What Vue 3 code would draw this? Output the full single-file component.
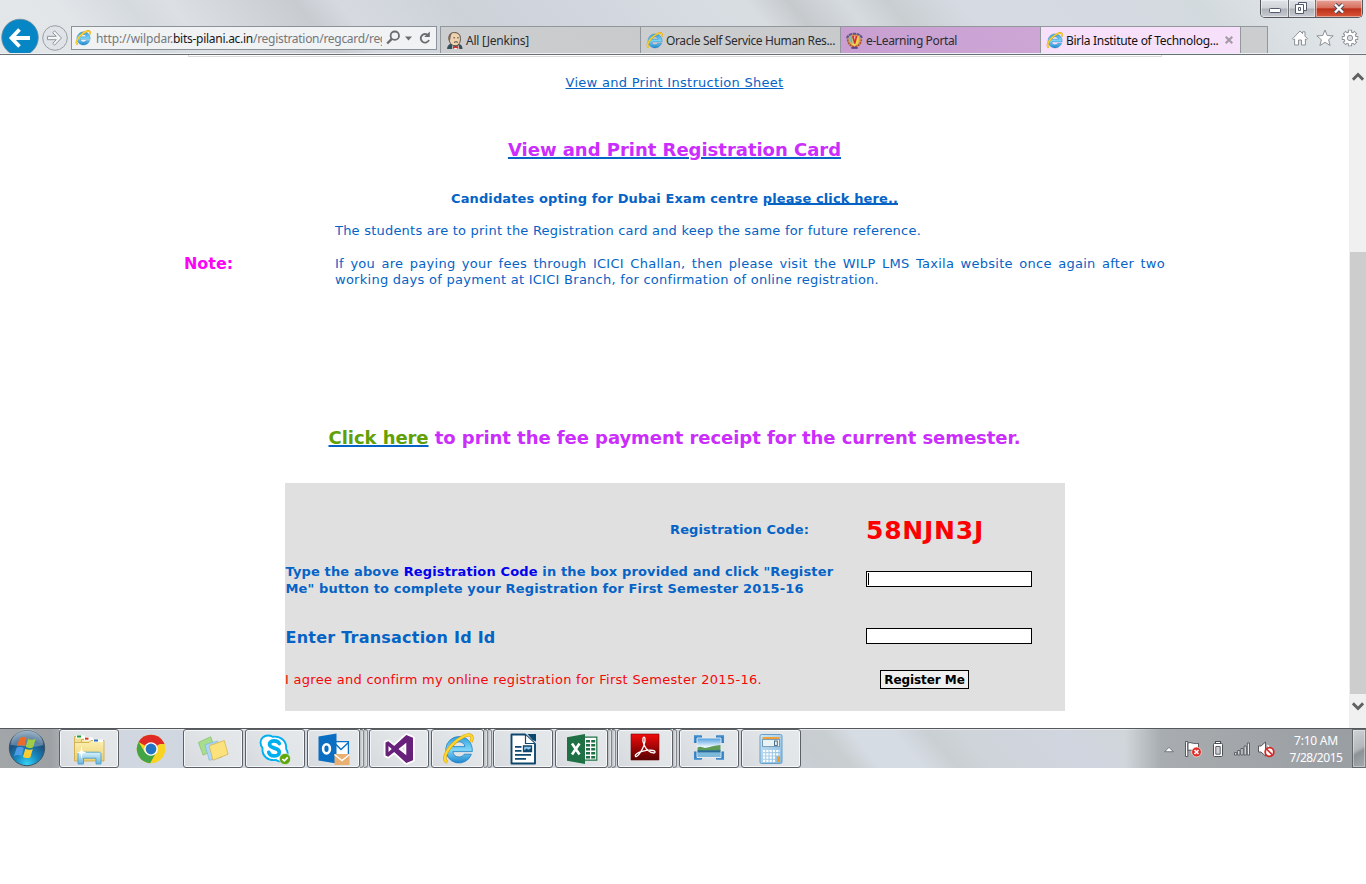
<script setup>
const tabs = [
  { title: 'All [Jenkins]', icon: 'jenkins', cls: 't-jenkins' },
  { title: 'Oracle Self Service Human Res...', icon: 'ie', cls: 't-oracle' },
  { title: 'e-Learning Portal', icon: 'crest', cls: 't-learn' },
  { title: 'Birla Institute of Technolog...', icon: 'ie', cls: 't-birla', active: true }
]
const tasks = [
  { icon: 'explorer' },
  { icon: 'chrome', plain: true },
  { icon: 'notes' },
  { icon: 'skype' },
  { icon: 'outlook', stack: 2 },
  { icon: 'vs' },
  { icon: 'ie', stack: 2 },
  { icon: 'writer' },
  { icon: 'excel', stack: 2 },
  { icon: 'acrobat', stack: 1 },
  { icon: 'snip' },
  { icon: 'calc' }
]
</script>

<template>
  <svg class="defs" width="0" height="0" aria-hidden="true">
    <defs>
      <linearGradient id="gIe" x1="0" y1="0" x2="0" y2="1">
        <stop offset="0" stop-color="#2f9fe0" /><stop offset=".5" stop-color="#7fd6f7" /><stop offset="1" stop-color="#1f86cf" />
      </linearGradient>
      <radialGradient id="gOrb" cx=".5" cy=".95" r=".95">
        <stop offset="0" stop-color="#35d3f5" /><stop offset=".35" stop-color="#1787bd" /><stop offset=".7" stop-color="#1c4f7c" /><stop offset="1" stop-color="#7d9cb4" />
      </radialGradient>
      <linearGradient id="gRed" x1="0" y1="0" x2="0" y2="1">
        <stop offset="0" stop-color="#f20b0b" /><stop offset="1" stop-color="#570000" />
      </linearGradient>
      <linearGradient id="gSky" x1="0" y1="0" x2="0" y2="1">
        <stop offset="0" stop-color="#4a9be0" /><stop offset=".45" stop-color="#f0f8fd" /><stop offset="1" stop-color="#9fd0ef" />
      </linearGradient>
      <linearGradient id="gCalc" x1="0" y1="0" x2="1" y2="1">
        <stop offset="0" stop-color="#cfe6f6" /><stop offset="1" stop-color="#84b9df" />
      </linearGradient>
      <linearGradient id="gFold" x1="0" y1="0" x2="0" y2="1">
        <stop offset="0" stop-color="#fbf0b4" /><stop offset="1" stop-color="#ecd06e" />
      </linearGradient>
      <linearGradient id="gGlass" x1="0" y1="0" x2="0" y2="1">
        <stop offset="0" stop-color="#d8f1fb" /><stop offset="1" stop-color="#6bb6dc" />
      </linearGradient>
    </defs>

    <symbol id="i-ie" viewBox="0 0 32 32">
      <path fill="url(#gIe)" stroke="#1d7fc0" stroke-width=".8" fill-rule="evenodd" d="M17 3.600a13.200 13.200 0 1 0 12.400 17.600h-7.200c-1 1.800-3 2.800-5.200 2.800-3.500 0-5.900-2.200-6.100-5.400h19.400C30.800 9.800 25.200 3.600 17 3.600zM11 13.600c.6-3 3-4.800 6-4.800s5.400 1.800 5.900 4.800z" />
      <path fill="none" stroke="#dc9f14" stroke-width="3.300" d="M5.500 29C.4 27.400 3 19.500 10 12 17.500 4 27.500-.4 29.600 3.200c.8 1.500.4 3.600-.6 5.800" />
      <path fill="none" stroke="#fcd72e" stroke-width="2.200" d="M5.500 29C.4 27.400 3 19.500 10 12 17.500 4 27.500-.4 29.600 3.200c.8 1.500.4 3.600-.6 5.800" />
    </symbol>

    <symbol id="i-jenkins" viewBox="0 0 16 16">
      <path fill="#33505c" d="M1 16c0-3 1.500-4.500 4-5.500l8 1c2 .8 2.500 2.500 2.500 4.500z" />
      <path fill="#efd3b0" stroke="#423832" stroke-width=".8" d="M2.800 5.800C2.800 2 5 .5 8 .5c3.400 0 5.600 2 5.600 5.500 0 4.200-1.800 7-5 7-3.400 0-5.800-3.300-5.800-7.200z" />
      <path fill="#7d685a" d="M2.500 7.500C1.800 3 3.800 1 5.800.7 4.300 3 4.500 6 3.600 8.800z" />
      <path stroke="#423832" stroke-width=".9" fill="none" d="M7 5.500h1.500M10.500 5.500H12M7.500 9.800c1.500-.8 2.500-.8 3.800 0" />
      <path fill="#fff" d="M6 12.500l3 2 3-2 .5 3.500H6z" />
      <path fill="#d22f2a" d="M6.500 13l2.500 1.200L11.700 13v3L9 14.900 6.500 16z" />
    </symbol>

    <symbol id="i-crest" viewBox="0 0 16 16">
      <circle cx="8" cy="7.500" r="6" fill="#d9a05c" />
      <path stroke="#61558f" stroke-width="2" stroke-dasharray="3 .6" fill="none" d="M1 6C2 .2 14 .2 15 6" />
      <path stroke="#a8552c" stroke-width="1.600" stroke-dasharray="2 .7" fill="none" d="M1.500 7c.5 4.500 3 6.500 6.500 7 3.500-.5 6-2.500 6.500-7" />
      <path fill="#f3d34e" d="M4 3.500h8V8c0 3-2 4.500-4 5.200C6 12.500 4 11 4 8z" />
      <path fill="#56bad2" d="M4 4h2v7.500C4.700 10.500 4 9 4 8z" />
      <path fill="#d8302e" d="M5.500 3.500h5.300L9 11H7.500z" />
      <path fill="#fff" d="M7.700 4h1.200l-.6 3.500z" />
      <path stroke="#493c82" stroke-width="1.500" d="M5 15h6" />
    </symbol>

    <symbol id="i-explorer" viewBox="0 0 32 32">
      <path fill="#f3df90" stroke="#cda847" stroke-width=".8" d="M1.500 3.500h10l1 3h7v19h-18z" />
      <path fill="#fff" d="M3 2.500h9v3H3z" /><path fill="#18a03a" d="M4 2.500h4v2H4z" />
      <path fill="#f6e6a0" stroke="#cda847" stroke-width=".8" d="M8.500 6.500h10l1 3h6v18h-17z" />
      <path fill="#fff" d="M11 4.500h9v3h-9z" /><path fill="#d6392e" d="M12 4.700h3.500v2H12z" />
      <path fill="url(#gFold)" stroke="#cda847" stroke-width=".8" d="M1.500 9.500h14.500l2-2h13v20.500h-29.500z" />
      <path fill="#fff" d="M20 6.500h10V9H20z" /><path fill="#2a70c9" d="M21 6.500h4v2h-4z" />
      <path fill="url(#gGlass)" stroke="#4d9fc8" stroke-width=".9" d="M5 31V21.500c0-1.500.8-2.300 2.300-2.300h18.400c1.500 0 2.300.8 2.300 2.300V31h-5v-5.800H10.500V31z" />
      <path fill="#fff" d="M8.500 13l.9 5 4 1.500-4 1.300-.9 5-.9-5-3.600-1.300 3.600-1.500z" />
    </symbol>

    <symbol id="i-chrome" viewBox="0 0 32 32">
      <circle cx="16" cy="16" r="14.300" fill="#f8d321" />
      <path fill="#df2a26" d="M16 16L3.600 8.900a14.300 14.300 0 0 1 24.800 0z" /><path fill="#df2a26" d="M16 9h12.500l1 2H16z" />
      <path fill="#42a445" d="M3.600 8.900a14.300 14.300 0 0 0 11.500 21.400L21.500 19 10 19.500z" />
      <circle cx="16" cy="16" r="6.800" fill="#fff" /><circle cx="16" cy="16" r="5.400" fill="#2474c5" />
    </symbol>

    <symbol id="i-notes" viewBox="0 0 34 32">
      <path fill="#a7dd8c" stroke="#83c26a" stroke-width=".8" d="M1.500 9l13-6 5 13.500-13 6z" />
      <path fill="#abd6f8" stroke="#83b9e5" stroke-width=".8" d="M8.500 11.500l13.500-4 4.500 17-13.500 3.500z" />
      <path fill="#fbe27d" stroke="#d9b84f" stroke-width=".9" d="M13 12.500l16-5.500L33 21.500 17 28z" />
    </symbol>

    <symbol id="i-skype" viewBox="0 0 32 32">
      <path fill="#fff" stroke="#00aff0" stroke-width="1.900" d="M9 2.500c2.300 0 3.600.6 4.700 1.300 8-1.300 14.200 4.500 13.500 12.200 1.300 2 1.500 3.500 1.500 5 0 4.300-3 7.500-7 7.500-2 0-3.500-.6-4.700-1.500C8.300 28.200 2.800 22.500 3.500 15 1.500 12.500 1.500 11 1.500 9.500c0-4 3.400-7 7.500-7z" />
      <path fill="none" stroke="#00aff0" stroke-width="3.700" stroke-linecap="round" d="M20.300 10.600c-1-2.200-3.400-2.700-5-2.700-2.800 0-4.800 1.400-4.800 3.400 0 5 9.800 2.600 9.800 7.900 0 2.500-2.500 3.700-5.200 3.700-2.600 0-4.600-1.100-5.300-3.500" />
      <circle cx="26" cy="26" r="5.600" fill="#5fa70b" stroke="#e8eaec" stroke-width=".7" />
      <path fill="none" stroke="#fff" stroke-width="1.700" d="M23.300 26l2 1.900 3.500-3.600" />
    </symbol>

    <symbol id="i-outlook" viewBox="0 0 32 32">
      <path fill="#fff" stroke="#0b72c6" stroke-width="1.300" d="M16 8.600h14.400v14H16z" />
      <path fill="none" stroke="#0b72c6" stroke-width="1.500" d="M16 9.500l7 7 7.500-7" />
      <path fill="#0a6fc2" d="M.5 3.500L18.500.5v30L.5 27.500z" />
      <ellipse cx="8.500" cy="15.800" rx="3.400" ry="4.600" fill="none" stroke="#fff" stroke-width="2.600" />
      <path fill="#e9b072" d="M16.500 21h15v11h-15z" /><path fill="none" stroke="#fff" stroke-width="1.400" d="M16.500 21.500l7.500 6 7.500-6" />
    </symbol>

    <symbol id="i-vs" viewBox="0 0 32 32">
      <path fill="#68217a" stroke="#fff" stroke-width="3.600" stroke-linejoin="round" paint-order="stroke" fill-rule="evenodd" d="M2.500 9.600l2.700-1.300 6 4.800L23.300 2 30 4.800v22.400L23.300 30 11.200 18.900l-6 4.800-2.700-1.300zM5.500 13v6l3.200-3zM15.500 16l7.800 6.300V9.700z" />
    </symbol>

    <symbol id="i-writer" viewBox="0 0 32 32">
      <path fill="#fff" stroke="#0e486f" stroke-width="1.900" stroke-linejoin="round" d="M4.500 1.500h13.500L28 11v19.500H4.500z" />
      <path fill="#fff" stroke="#0e486f" stroke-width="1.200" d="M18.500 2v8.500h9" />
      <path fill="#0e486f" d="M20.500 1H29v7.500L25.500 7z" />
      <path stroke="#0e486f" stroke-width="1.800" d="M8 13.800h6.500M8 17.800h6.500M8 21.800h16M8 25.800h11" />
      <path fill="#8fc5e6" stroke="#0e486f" stroke-width="1.300" d="M16.500 13h8v5.500h-8z" /><path fill="#0e486f" d="M16.500 18l3-2.500 2 1.300 3-1.800v3z" />
    </symbol>

    <symbol id="i-excel" viewBox="0 0 32 32">
      <path fill="#fff" stroke="#1f7145" stroke-width="1.200" d="M17 4.200h13.800v23H17z" />
      <path fill="#1f7145" d="M20 7h4v2.500h-4zM25.200 7h4v2.500h-4zM20 11h4v2.500h-4zM25.200 11h4v2.500h-4zM20 15h4v2.500h-4zM25.200 15h4v2.500h-4zM20 19h4v2.500h-4zM25.200 19h4v2.500h-4zM20 23h4v2.500h-4zM25.200 23h4v2.500h-4z" />
      <path fill="#1f7145" d="M1 4.200L19 1v30L1 27.800z" />
      <path stroke="#fff" stroke-width="2.600" d="M6 10.500l7.500 11M13.500 10.500L6 21.500" />
    </symbol>

    <symbol id="i-acrobat" viewBox="0 0 32 32">
      <path fill="url(#gRed)" stroke="#6d0808" stroke-width=".6" d="M2 1h28v26H2z" />
      <path fill="none" stroke="#fff" stroke-width="1.300" stroke-linejoin="round" d="M6.500 23.300c-1-1.700 2.500-4 7.500-5.200 5.300-1.300 11.500-1.200 12 .6.400 1.700-3 2-6.500-.9-3.800-3.200-6.500-9-5.500-12.600.5-1.600 1.900-1.400 2 .4.200 3.500-1.800 9.300-4.500 13.500-2 3.200-4.300 5.300-5 4.200z" />
    </symbol>

    <symbol id="i-snip" viewBox="0 0 32 32">
      <path fill="none" stroke="#2c76b8" stroke-width="3.600" d="M2.800 10V4.300h6.200M23 4.300h6.200V10M29.200 18.500v6.200H23M9 24.700H2.800v-6.200" />
      <path fill="url(#gSky)" stroke="#e6eaee" stroke-width="1" d="M4 5h24v19.500H4z" />
      <path fill="#5d9b57" d="M4.500 14.500c2-1.500 4-.5 7.500.5 5-.5 10-3 15.500-3v6h-23z" /><path fill="#286c9d" d="M4.500 17.300h23v2.500h-23z" /><path fill="#7db9d8" d="M4.500 19.500h23V24h-23z" />
      <path fill="none" stroke="#3f8fd0" stroke-width="1.500" d="M1.700 9.500V3.200h6.500M23.800 3.200h6.500v6.300M30.300 19.200v6.600h-6.500M8.200 25.800H1.700v-6.600" />
    </symbol>

    <symbol id="i-calc" viewBox="0 0 32 32">
      <rect x="5" y="1.500" width="22" height="29" rx="1.500" fill="url(#gCalc)" stroke="#679fca" />
      <path fill="#f3a238" d="M7.500 4h17v2.200h-17z" /><path fill="#e9f3f3" stroke="#5a84a4" stroke-width=".8" d="M7.500 6.400h17v7.200h-17z" />
      <rect x="19.500" y="8" width="2.800" height="4.400" fill="none" stroke="#3f5f7a" stroke-width=".9" />
      <path stroke="#fff" stroke-width="2.200" stroke-dasharray="2.200 1.100" d="M8 18h17M8 21.300h17M8 24.600h13M8 27.900h13" />
      <path fill="#f39a25" d="M22.300 23.500h2.600v5.500h-2.600z" />
    </symbol>
  </svg>

  <div class="screen">
    <header class="chrome">
      <div class="wincontrols">
        <span class="wc min"><svg width="14" height="8" viewBox="0 0 14 8"><rect x="1.500" y="2.500" width="11" height="4" rx=".8" fill="#fff" stroke="#55596e" /></svg></span>
        <span class="wc res"><svg width="14" height="14" viewBox="0 0 14 14"><path fill="#fff" stroke="#55596e" d="M4.500 1.500h8v8h-8z" /><path fill="#fff" stroke="#55596e" d="M1.500 3.500h8v9h-8z" /><path fill="none" stroke="#55596e" d="M4.500 6.500h2v3h-2z" /></svg></span>
        <span class="wc cls"><svg width="12" height="11" viewBox="0 0 12 11"><path fill="none" stroke="#4c4a5c" stroke-width="4.300" d="M2 1.500l8 8M10 1.500l-8 8" /><path fill="none" stroke="#fff" stroke-width="2.400" d="M2 1.500l8 8M10 1.500l-8 8" /></svg></span>
      </div>
      <div class="navrow">
        <svg class="back" width="40" height="35" viewBox="0 0 40 35"><circle cx="20" cy="19.500" r="18.300" fill="#0786c6" stroke="#6f8b9b" stroke-width=".8" /><path fill="none" stroke="#fff" stroke-width="3.800" d="M11.500 20H30M19.500 11.500L11.500 20l8 8.500" /></svg>
        <svg class="fwd" width="28" height="28" viewBox="0 0 28 28"><circle cx="14" cy="14" r="12.300" fill="#e0e4e8" stroke="#9a9fa4" /><path fill="#f3f5f6" stroke="#8f9499" stroke-linejoin="round" d="M6.500 12.300h8.800l-3.600-3.600 1.900-1.900L20.500 14l-6.900 7.200-1.900-1.900 3.600-3.600H6.500z" /></svg>
        <div class="address">
          <svg width="16" height="16"><use href="#i-ie" /></svg>
          <div class="url"><span class="u1">http://wilpdar.</span><b>bits-pilani.ac.in</b><span class="u3">/registration/regcard/reg</span></div>
          <svg class="tools" width="46" height="16" viewBox="0 0 46 16"><circle cx="8.800" cy="5.700" r="4.200" fill="none" stroke="#6a6d70" stroke-width="1.800" /><path stroke="#6a6d70" stroke-width="2.400" d="M5.800 8.800L1.200 13.500" /><path fill="#6a6d70" d="M19 6.500h7l-3.500 4z" /><path fill="none" stroke="#6a6d70" stroke-width="1.900" d="M42.300 5.500A4.300 4.300 0 1 0 43 10" /><path fill="#6a6d70" d="M43.800 1.500v5.600h-5.600z" /></svg>
        </div>
        <div class="tabs">
          <div v-for="t in tabs" :key="t.title" class="tab" :class="[t.cls, { active: t.active }]">
            <svg width="17" height="17"><use :href="'#i-' + t.icon" /></svg>
            <span class="tt">{{ t.title }}</span>
            <svg v-if="t.active" class="x" width="8" height="8" viewBox="0 0 8 8"><path stroke="#a597a6" stroke-width="2" d="M.7.7l6.600 6.600M7.300.7L.7 7.300" /></svg>
          </div>
          <div class="newtab"></div>
        </div>
        <div class="corner">
          <svg width="18" height="18" viewBox="0 0 18 18"><path fill="#fff" stroke="#8d9196" stroke-linejoin="round" d="M1.500 9.800L9 2l2.500 2.600V2.800H14v4.400l2.500 2.600-1.100 1.100-1-1V16h-3.900v-5H7.500v5H3.600V9.900l-1 1z" /></svg>
          <svg width="18" height="18" viewBox="0 0 18 18"><path fill="#fff" stroke="#8d9196" stroke-linejoin="round" d="M9 1l2.200 5.500 6 .4-4.600 3.800 1.500 5.800L9 13.300l-5.100 3.200 1.500-5.800L.8 6.900l6-.4z" /></svg>
          <svg width="18" height="18" viewBox="0 0 18 18">
            <g stroke="#8d9196" stroke-width="4.200" fill="none"><path d="M9 .8v16.400M.8 9h16.400M3.200 3.200l11.600 11.600M14.800 3.200L3.200 14.800" /></g>
            <circle cx="9" cy="9" r="6.500" fill="#8d9196" />
            <g stroke="#fff" stroke-width="2.200" fill="none"><path d="M9 1.600v14.800M1.600 9h14.800M3.800 3.800l10.400 10.400M14.200 3.800L3.800 14.200" /></g>
            <circle cx="9" cy="9" r="5.600" fill="#fff" /><circle cx="9" cy="9" r="2.700" fill="#dde1e5" stroke="#8d9196" />
          </svg>
        </div>
      </div>
    </header>

    <div class="viewport">
      <main class="page">
        <div class="rule"></div>
        <p class="instr"><a>View and Print Instruction Sheet</a></p>
        <h2 class="card"><a>View and Print Registration Card</a></h2>
        <p class="dubai">Candidates opting for Dubai Exam centre <a>please click here..</a></p>
        <section class="note">
          <strong>Note:</strong>
          <div class="notes">
            <p class="n1">The students are to print the Registration card and keep the same for future reference.</p>
            <p class="n2">If you are paying your fees through ICICI Challan, then please visit the WILP LMS Taxila website once again after two working days of payment at ICICI Branch, for confirmation of online registration.</p>
          </div>
        </section>
        <h2 class="receipt"><a>Click here</a> to print the fee payment receipt for the current semester.</h2>
        <form class="reg" @submit.prevent>
          <label class="lcode">Registration Code:</label>
          <span class="code">58NJN3J</span>
          <label class="ltype">Type the above <em>Registration Code</em> in the box provided and click "Register<br />Me" button to complete your Registration for First Semester 2015-16</label>
          <span class="field caret"></span>
          <label class="ltrans">Enter Transaction Id Id</label>
          <span class="field"></span>
          <label class="lagree">I agree and confirm my online registration for First Semester 2015-16.</label>
          <button type="submit">Register Me</button>
        </form>
      </main>
      <div class="scroll">
        <svg class="up" width="12" height="9" viewBox="0 0 12 9"><path fill="none" stroke="#606060" stroke-width="2.800" d="M.9 7.700L6 2.500l5.100 5.200" /></svg>
        <div class="thumb"></div>
        <svg class="down" width="12" height="9" viewBox="0 0 12 9"><path fill="none" stroke="#606060" stroke-width="2.800" d="M.9 1.300L6 6.500l5.100-5.200" /></svg>
      </div>
    </div>

    <footer class="taskbar">
      <div class="start">
        <svg width="38" height="38" viewBox="0 0 38 38">
          <circle cx="19" cy="19" r="17.700" fill="url(#gOrb)" stroke="#3b5468" />
          <path fill="#fff" opacity=".28" d="M3 16a16 16 0 0 1 32 0c-6 3-22 1-32 0z" />
          <path fill="#ec6b28" d="M11.500 9.200c2.600-1.700 4.900-1.500 7.100-.2l-2.300 8.300c-2.200-1.400-4.500-1.400-7.200-.1z" />
          <path fill="#a0cd45" d="M20 9.800c2.600 1.400 5 1.400 7.700 0l-2.500 8.500c-2.500 1.400-4.900 1.100-7.400-.2z" />
          <path fill="#4d9be5" d="M8.600 18.700c2.600-1.200 4.900-1.100 7.200.2l-2.300 8.300c-2.300-1.400-4.500-1.500-7.400-.1z" />
          <path fill="#fbcf34" d="M17.300 19.700c2.600 1.400 4.900 1.500 7.500.2l-2.400 8.300c-2.600 1.200-4.900 1.100-7.400-.2z" />
        </svg>
      </div>
      <div class="tasks">
        <div v-for="k in tasks" :key="k.icon" class="slot">
          <div class="task" :class="{ plain: k.plain, s1: k.stack === 1, s2: k.stack === 2 }">
            <svg width="32" height="32"><use :href="'#i-' + k.icon" /></svg>
          </div>
          <i v-for="n in k.stack || 0" :key="n" class="edge"></i>
        </div>
      </div>
      <div class="tray">
        <svg width="112" height="18" viewBox="0 0 112 18">
          <path fill="#fff" stroke="#5c6268" stroke-width=".8" d="M.7 11.700L5 7.300l4.300 4.400z" />
          <path fill="#fff" stroke="#4b4e52" stroke-width=".9" d="M21.500 1.500h2.300v15h-2.300z" /><path fill="#fff" stroke="#4b4e52" stroke-width=".9" d="M24 3c3-1.300 4.500 1.300 10.500.4v7.400c-5 .9-7.500-1.600-10.500-.4z" />
          <circle cx="32.500" cy="12" r="4.900" fill="#dc2f2b" stroke="#fff" stroke-width=".6" /><path stroke="#fff" stroke-width="1.700" d="M30.500 10l4 4M34.500 10l-4 4" />
          <rect x="51.500" y="1.500" width="5" height="3" fill="#fff" stroke="#4b4e52" /><rect x="49.500" y="3.500" width="9" height="13" rx="1" fill="#fff" stroke="#4b4e52" /><path fill="#d0d3d5" stroke="#4b4e52" stroke-width=".9" d="M51.800 6.500h4.400v7.700h-4.400z" />
          <path fill="#e8eaeb" stroke="#54585c" stroke-width=".9" d="M70.500 12.500h2.200v2.500h-2.200zM73.700 10.500h2.200V15h-2.200zM76.900 8.500h2.200V15h-2.200zM80.100 6h2.200v9h-2.200zM83.300 3h2.200v12h-2.200z" />
          <path fill="#fff" stroke="#4b4e52" stroke-width=".9" d="M94.500 6h2.500l4.500-4v14L97 12h-2.500z" /><path fill="none" stroke="#fff" stroke-width="1.200" d="M103.500 5c2 2 2 5 0 7" />
          <circle cx="105.500" cy="12" r="4.300" fill="#fff" stroke="#d42a27" stroke-width="1.800" /><path stroke="#d42a27" stroke-width="1.700" d="M102.500 9l6 6" />
        </svg>
        <div class="clock"><span class="c1">7:10 AM</span><span class="c2">7/28/2015</span></div>
        <div class="peek"></div>
      </div>
    </footer>
  </div>
</template>

<style>
html, body { background: #fff; overflow: hidden; }
</style>

<style scoped>
.defs { position: absolute; }
svg { display: block; flex: none; }
p, h2 { margin: 0; white-space: nowrap; }
.screen { width: 1366px; height: 884px; display: flex; flex-direction: column; background: #fff; overflow: hidden; }

.chrome {
  height: 55px; box-sizing: border-box; border-bottom: 1px solid #6b6f76; display: flex; flex-direction: column; flex: none;
  box-shadow: inset 0 -1px 0 #eef1f4;
  background: linear-gradient(50deg, #e3e7ea 0, #e2e6e9 7%, #d5dadf 12%, #dce0e5 15%, #c8ccd1 24%, #d6dae0 27%, #cdd2d9 35%, #d2d7df 45%, #d7dce2 52%, #d8dde1 56%, #c6cacd 59%, #d6dbe0 63%, #c9ced1 66%, #d6dbe3 71%, #d5dae2 80%, #d3dade 88%, #e2e6e9 97%);
}
.wincontrols { height: 18px; align-self: flex-end; display: flex; margin-right: 3px; border: 1px solid #54575c; border-top: 0; border-radius: 0 0 5px 5px; overflow: hidden; box-sizing: border-box; width: 103px; flex: none; }
.wc { display: flex; align-items: center; justify-content: center; box-sizing: border-box; background: linear-gradient(#e0e3e8 0, #cfd2d6 48%, #aeb1b6 52%, #c9cdd3 100%); box-shadow: inset 0 0 0 1px rgba(255, 255, 255, .45); }
.min { width: 28px; border-right: 1px solid #6d7075; }
.res { width: 27px; border-right: 1px solid #6d7075; }
.res svg { margin: -2px 2px 0 0; }
.cls { flex: 1; background: linear-gradient(#e6a398 0, #d7705e 46%, #bd2f18 52%, #d8573a 100%); }
.cls svg { margin-top: -1px; }
.min svg { margin-top: 3px; }
.navrow { flex: 1; display: flex; align-items: flex-start; }
.fwd { margin: 6px 0 0 1px; }
.address { margin: 8px 0 0 2px; width: 366px; height: 24px; box-sizing: border-box; border: 1px solid #8c9299; background: #f0f2f4; display: flex; align-items: center; padding-left: 3px; font: 12px/16px "Noto Sans", "Open Sans", sans-serif; color: #75787b; }
.url { width: 286px; margin-left: 5px; overflow: hidden; white-space: nowrap; display: flex; padding-top: 2px; }
.url b { font-weight: 400; color: #17181a; letter-spacing: -.276px; }
.u1 { letter-spacing: -.132px; }
.u3 { letter-spacing: -.293px; }
.tools { margin-left: 4px; }
.tabs { display: flex; margin: 8px 0 0 3px; height: 27px; }
.tab { width: 200px; height: 27px; box-sizing: border-box; border-top: 1px solid #92979b; border-left: 1px solid #92979b; display: flex; align-items: center; padding-left: 5px; background: linear-gradient(50deg, #cccecf, #c8cacc); font: 12px/16px "Noto Sans", "Open Sans", sans-serif; color: #2c2d30; white-space: nowrap; }
.tt { margin-left: 3px; padding-top: 2px; }
.t-jenkins .tt { letter-spacing: -.24px; }
.t-oracle .tt { letter-spacing: -.37px; }
.t-learn { background: linear-gradient(50deg, #c89fd0, #cda6d6); }
.t-learn .tt { letter-spacing: -.38px; }
.t-birla { background: #f6e0fa; color: #111; }
.t-birla .tt { letter-spacing: -.3px; }
.x { margin-left: 7px; }
.newtab { width: 28px; height: 27px; box-sizing: border-box; border: 1px solid #92979b; border-bottom: 0; background: #cbcdce; }
.corner { display: flex; gap: 7px; margin: 11px 0 0 23px; }

.viewport { height: 673px; display: flex; flex: none; }
.page { width: 1349px; display: flex; flex-direction: column; align-items: center; font: 13px/16px "DejaVu Sans", Verdana, sans-serif; color: #0563c6; }
.rule { width: 974px; height: 2px; box-sizing: border-box; border: 1px solid #dadada; border-top: 0; }
a { text-decoration: underline; text-underline-offset: 2px; text-decoration-thickness: 1px; cursor: pointer; }
.instr { margin-top: 18px; letter-spacing: .284px; }
.instr a { text-underline-offset: 1px; }
.card { margin-top: 47px; font-size: 18px; line-height: 24px; color: #cb2dfc; letter-spacing: -.02px; }
.card a, .receipt a { text-decoration-color: #0563c6; text-decoration-thickness: 2px; text-underline-offset: 1px; }
.dubai { margin-top: 29px; font-weight: 700; letter-spacing: .114px; }
.dubai a { text-decoration-thickness: 2px; text-underline-offset: 0; }
.note { width: 980px; margin-top: 16px; margin-left: -1px; display: flex; align-items: flex-start; }
.note strong { width: 151px; flex: none; margin-top: 31px; font-size: 16px; line-height: 20px; color: #fb04f5; letter-spacing: -.05px; }
.notes { width: 830px; flex: none; }
.n1 { letter-spacing: .217px; }
.n2 { margin-top: 17px; white-space: normal; text-align: justify; letter-spacing: .269px; }
.receipt { margin-top: 138px; font-size: 18px; line-height: 24px; color: #cb2dfc; letter-spacing: -.055px; }
.receipt a { color: #61a005; }
.reg { width: 780px; height: 228px; margin-top: 33px; margin-left: 1px; background: #e0e0e0; display: grid; grid-template-columns: 581px 199px; grid-template-rows: 72px 48px 60px 48px; box-sizing: border-box; color: #0563c6; }
.reg label { white-space: nowrap; }
.lcode { font-weight: 700; letter-spacing: .116px; justify-self: end; margin: 39px 57px 0 0; }
.code { color: #fd0000; font-size: 25px; font-weight: 700; line-height: 30px; letter-spacing: .77px; margin-top: 33px; }
.ltype { font-weight: 700; line-height: 17px; letter-spacing: .135px; margin: 8px 0 0; padding-left: .5px; }
.ltype em { font-style: normal; color: #0000ee; }
.field { width: 166px; height: 16px; box-sizing: border-box; border: 1px solid #000; background: #fff; margin-top: 16px; }
.caret { display: flex; padding: 1px; }
.caret::before { content: ""; width: 1px; height: 12px; background: #000; }
.ltrans { font-weight: 700; font-size: 16px; line-height: 20px; letter-spacing: .226px; margin: 25px 0 0; padding-left: .5px; }
.ltrans + .field { margin-top: 25px; }
.lagree { color: #f40808; letter-spacing: .285px; margin: 9px 0 0; }
button { width: 89px; height: 19px; margin: 7px 0 0 14px; padding: 0; box-sizing: border-box; border: 1px solid #000; background: #efefef; color: #000; font: 700 12px/16px "DejaVu Sans", Verdana, sans-serif; white-space: nowrap; border-radius: 0; letter-spacing: -.08px; }
.scroll { width: 17px; background: #f0f0f0; display: flex; flex-direction: column; align-items: center; }
.up { margin-top: 17px; }
.thumb { width: 16px; height: 442px; margin-top: 171px; background: #cdcdcd; align-self: flex-end; }
.down { margin-top: 8px; }

.taskbar { height: 40px; box-sizing: border-box; border-top: 1px solid #54575b; display: flex; flex: none; background: linear-gradient(50deg, #d2d8e1 0, #cdd3dd 55%, #c8cdd1 59%, #c9ced0 61%, #d6dce4 63%, #d6dce4 66%, #c9cfd2 68.5%, #cfd4da 71%, #d0d5df 78%, #d1d6db 82%); box-shadow: inset 0 1px 0 #e6eaed; }
.start { width: 59px; background: linear-gradient(90deg, #a3a6a9 0, #9da1a4 85%, #a8acb0 100%); }
.start svg { margin: 0 0 0 8px; }
.tasks { display: flex; flex: none; }
.slot { width: 62px; height: 39px; display: flex; }
.task { width: 60px; height: 39px; box-sizing: border-box; border: 1px solid #5d6064; border-radius: 3px; box-shadow: inset 0 0 0 1px rgba(255, 255, 255, .7); background: linear-gradient(50deg, #d6dade, #e2e5e8 55%, #e5e8ea); display: flex; align-items: center; justify-content: center; }
.plain { border-color: transparent; background: none; box-shadow: none; }
.s2 { width: 53px; }
.s1 { width: 56px; }
.edge { width: 4px; height: 39px; box-sizing: border-box; border-right: 1px solid #84888c; border-top: 1px solid #5d6064; border-bottom: 1px solid #84888c; border-radius: 0 3px 3px 0; background: linear-gradient(90deg, #b6babe, #e4e7e9); }
.tray { flex: 1; display: flex; align-items: center; justify-content: flex-end; background: linear-gradient(90deg, transparent 322px, rgba(163, 168, 172, .9) 358px, #a5a9ac 400px, #989da2 100%); }
.clock { width: 64px; margin-left: 8px; display: flex; flex-direction: column; align-items: center; font: 12px/17px "Noto Sans", "Open Sans", sans-serif; color: #fff; margin-right: 4px; }
.c1 { letter-spacing: -.21px; }
.c2 { letter-spacing: -.44px; }
.peek { width: 14px; height: 39px; box-sizing: border-box; border: 1px solid #62676c; border-right-color: #7c8186; background: linear-gradient(150deg, #d0d3d5 0, #b3b7ba 50%, #8d9297 60%, #a5aaae 100%); box-shadow: inset 0 0 0 1px rgba(255, 255, 255, .35); }
</style>
